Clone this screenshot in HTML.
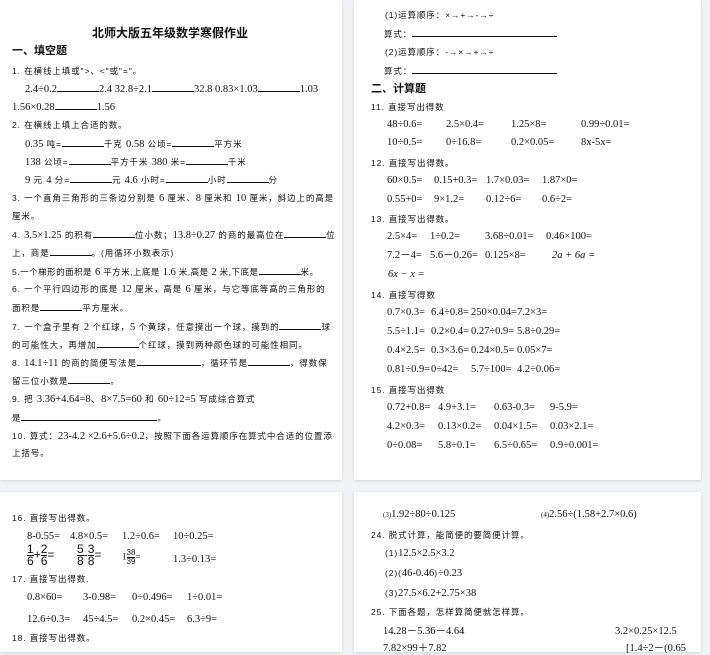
<!DOCTYPE html>
<html><head><meta charset="utf-8"><style>
body{margin:0;width:710px;height:646px;background:#f2f3f6;position:relative;overflow:hidden;font-family:"Liberation Serif","Noto Sans CJK SC",serif;color:#111}
.pg{position:absolute;background:#fff;box-shadow:0 1px 3px rgba(0,0,0,.12)}
.l{position:absolute;white-space:nowrap;font-size:10px;line-height:12px}
.c{font-family:"Liberation Sans","Noto Sans CJK SC",sans-serif;font-size:8.5px;letter-spacing:.9px}
.n{font-size:10.5px;font-family:"Liberation Serif",serif;letter-spacing:0}
.b{display:inline-block;border-bottom:1px solid #111;height:9px;vertical-align:baseline}
.h{font-family:"Liberation Sans","Noto Sans CJK SC",sans-serif;font-weight:bold;font-size:11px}
.s{position:absolute}
.f{display:inline-block;vertical-align:middle;text-align:center;font-family:"Liberation Sans",sans-serif;font-size:12px;line-height:11px}
.f span{display:block;border-top:1px solid #111}
</style></head><body>
<div class="pg" style="left:0;top:0;width:342px;height:480px"></div>
<div class="pg" style="left:354px;top:0;width:347px;height:480px"></div>
<div class="pg" style="left:0;top:492px;width:342px;height:160px"></div>
<div class="pg" style="left:354px;top:492px;width:347px;height:160px"></div>

<div class="l h" style="left:92px;top:27px;font-size:12px">北师大版五年级数学寒假作业</div>
<div class="l h" style="left:12px;top:45px">一、填空题</div>
<div class="l c" style="left:12px;top:65px">1. 在横线上填或"&gt;、&lt;"或"="。</div>
<div class="l n" style="left:25px;top:82px">2.4÷0.2<span class="b" style="width:42px"></span>2.4 32.8÷2.1<span class="b" style="width:42px"></span>32.8 0.83×1.03<span class="b" style="width:42px"></span>1.03</div>
<div class="l n" style="left:12px;top:100px">1.56×0.28<span class="b" style="width:42px"></span>1.56</div>
<div class="l c" style="left:12px;top:119px">2. 在横线上填上合适的数。</div>
<div class="l c" style="left:25px;top:137px"><span class="n">0.35</span> 吨=<span class="b" style="width:42px"></span>千克 <span class="n">0.58</span> 公顷=<span class="b" style="width:42px"></span>平方米</div>
<div class="l c" style="left:25px;top:155px"><span class="n">138</span> 公顷=<span class="b" style="width:42px"></span>平方千米 <span class="n">380</span> 米=<span class="b" style="width:42px"></span>千米</div>
<div class="l c" style="left:25px;top:173px"><span class="n">9</span> 元 <span class="n">4</span> 分=<span class="b" style="width:42px"></span>元 <span class="n">4.6</span> 小时=<span class="b" style="width:42px"></span>小时<span class="b" style="width:42px"></span>分</div>
<div class="l c" style="left:12px;top:192px">3. 一个直角三角形的三条边分别是 <span class="n">6</span> 厘米、<span class="n">8</span> 厘米和 <span class="n">10</span> 厘米，斜边上的高是</div>
<div class="l c" style="left:12px;top:210px">厘米。</div>
<div class="l c" style="left:12px;top:228px">4. <span class="n">3.5×1.25</span> 的积有<span class="b" style="width:42px"></span>位小数；<span class="n">13.8÷0.27</span> 的商的最高位在<span class="b" style="width:42px"></span>位</div>
<div class="l c" style="left:12px;top:246px">上，商是<span class="b" style="width:42px"></span>。(用循环小数表示)</div>
<div class="l c" style="left:12px;top:265px;letter-spacing:.5px">5.一个梯形的面积是 <span class="n">6</span> 平方米,上底是 <span class="n">1.6</span> 米,高是 <span class="n">2</span> 米,下底是<span class="b" style="width:42px"></span>米。</div>
<div class="l c" style="left:12px;top:283px">6. 一个平行四边形的底是 <span class="n">12</span> 厘米，高是 <span class="n">6</span> 厘米，与它等底等高的三角形的</div>
<div class="l c" style="left:12px;top:301px">面积是<span class="b" style="width:42px"></span>平方厘米。</div>
<div class="l c" style="left:12px;top:320px">7. 一个盒子里有 <span class="n">2</span> 个红球，<span class="n">5</span> 个黄球，任意摸出一个球，摸到的<span class="b" style="width:42px"></span>球</div>
<div class="l c" style="left:12px;top:338px">的可能性大，再增加<span class="b" style="width:42px"></span>个红球，摸到两种颜色球的可能性相同。</div>
<div class="l c" style="left:12px;top:356px">8. <span class="n">14.1÷11</span> 的商的简便写法是<span class="b" style="width:64px"></span>，循环节是<span class="b" style="width:42px"></span>，得数保</div>
<div class="l c" style="left:12px;top:374px">留三位小数是<span class="b" style="width:42px"></span>。</div>
<div class="l c" style="left:12px;top:393px">9. 把 <span class="n">3.36+4.64=8、8×7.5=60</span> 和 <span class="n">60÷12=5</span> 写成综合算式</div>
<div class="l c" style="left:12px;top:411px">是<span class="b" style="width:136px"></span>。</div>
<div class="l c" style="left:12px;top:430px">10. 算式：<span class="n">23-4.2 ×2.6+5.6÷0.2</span>，按照下面各运算顺序在算式中合适的位置添</div>
<div class="l c" style="left:12px;top:447px">上括号。</div>

<div class="l c" style="left:385px;top:9px">(1)运算顺序：×→+→-→÷</div>
<div class="l c" style="left:384px;top:27px">算式：<span class="b" style="width:145px"></span></div>
<div class="l c" style="left:385px;top:46px">(2)运算顺序：-→×→+→÷</div>
<div class="l c" style="left:384px;top:64px">算式：<span class="b" style="width:145px"></span></div>
<div class="l h" style="left:371px;top:83px">二、计算题</div>
<div class="l c" style="left:371px;top:101px">11. 直接写出得数</div>
<div class="l n" style="top:119px;left:0;width:710px"><span class="s" style="left:387px">48÷0.6=</span><span class="s" style="left:446px">2.5×0.4=</span><span class="s" style="left:511px">1.25×8=</span><span class="s" style="left:581px">0.99÷0.01=</span></div>
<div class="l n" style="top:137px;left:0;width:710px"><span class="s" style="left:387px">10÷0.5=</span><span class="s" style="left:446px">0÷16.8=</span><span class="s" style="left:511px">0.2×0.05=</span><span class="s" style="left:581px">8x-5x=</span></div>
<div class="l c" style="left:371px;top:157px">12. 直接写出得数。</div>
<div class="l n" style="top:175px;left:0;width:710px"><span class="s" style="left:387px">60×0.5=</span><span class="s" style="left:434px">0.15+0.3=</span><span class="s" style="left:486px">1.7×0.03=</span><span class="s" style="left:542px">1.87×0=</span></div>
<div class="l n" style="top:194px;left:0;width:710px"><span class="s" style="left:387px">0.55+0=</span><span class="s" style="left:434px">9×1.2=</span><span class="s" style="left:486px">0.12÷6=</span><span class="s" style="left:542px">0.6÷2=</span></div>
<div class="l c" style="left:371px;top:213px">13. 直接写出得数。</div>
<div class="l n" style="top:231px;left:0;width:710px"><span class="s" style="left:387px">2.5×4=</span><span class="s" style="left:430px">1÷0.2=</span><span class="s" style="left:485px">3.68÷0.01=</span><span class="s" style="left:546px">0.46×100=</span></div>
<div class="l n" style="top:250px;left:0;width:710px"><span class="s" style="left:387px">7.2－4=</span><span class="s" style="left:430px">5.6－0.26=</span><span class="s" style="left:485px">0.125×8=</span><span class="s" style="left:552px;font-style:italic">2a + 6a =</span></div>
<div class="l n" style="left:388px;top:269px;font-style:italic">6x − x =</div>
<div class="l c" style="left:371px;top:289px">14. 直接写得数</div>
<div class="l n" style="top:307px;left:0;width:710px"><span class="s" style="left:387px">0.7×0.3=</span><span class="s" style="left:431px">6.4÷0.8=</span><span class="s" style="left:471px">250×0.04=</span><span class="s" style="left:517px">7.2×3=</span></div>
<div class="l n" style="top:326px;left:0;width:710px"><span class="s" style="left:387px">5.5÷1.1=</span><span class="s" style="left:431px">0.2×0.4=</span><span class="s" style="left:471px">0.27÷0.9=</span><span class="s" style="left:517px">5.8÷0.29=</span></div>
<div class="l n" style="top:345px;left:0;width:710px"><span class="s" style="left:387px">0.4×2.5=</span><span class="s" style="left:431px">0.3×3.6=</span><span class="s" style="left:471px">0.24×0.5=</span><span class="s" style="left:517px">0.05×7=</span></div>
<div class="l n" style="top:364px;left:0;width:710px"><span class="s" style="left:387px">0.81÷0.9=</span><span class="s" style="left:431px">0÷42=</span><span class="s" style="left:471px">5.7÷100=</span><span class="s" style="left:517px">4.2÷0.06=</span></div>
<div class="l c" style="left:371px;top:384px">15. 直接写出得数</div>
<div class="l n" style="top:402px;left:0;width:710px"><span class="s" style="left:387px">0.72+0.8=</span><span class="s" style="left:438px">4.9+3.1=</span><span class="s" style="left:494px">0.63-0.3=</span><span class="s" style="left:550px">9-5.9=</span></div>
<div class="l n" style="top:421px;left:0;width:710px"><span class="s" style="left:387px">4.2×0.3=</span><span class="s" style="left:438px">0.13×0.2=</span><span class="s" style="left:494px">0.04×1.5=</span><span class="s" style="left:550px">0.03×2.1=</span></div>
<div class="l n" style="top:440px;left:0;width:710px"><span class="s" style="left:387px">0÷0.08=</span><span class="s" style="left:438px">5.8÷0.1=</span><span class="s" style="left:494px">6.5÷0.65=</span><span class="s" style="left:550px">0.9÷0.001=</span></div>

<div class="l c" style="left:12px;top:512px">16. 直接写出得数。</div>
<div class="l n" style="top:531px;left:0;width:342px"><span class="s" style="left:27px">8-0.55=</span><span class="s" style="left:70px">4.8×0.5=</span><span class="s" style="left:122px">1.2÷0.6=</span><span class="s" style="left:173px">10÷0.25=</span></div>
<div class="s" style="left:27px;top:544px;font-size:12px;font-family:'Liberation Sans',sans-serif;white-space:nowrap"><span class="f">1<span>6</span></span>+<span class="f">2<span>6</span></span>=</div>
<div class="s" style="left:77px;top:544px;font-size:12px;font-family:'Liberation Sans',sans-serif;white-space:nowrap"><span class="f">5<span>8</span></span>-<span class="f">3<span>8</span></span>=</div>
<div class="s" style="left:122px;top:549px;font-size:9px;white-space:nowrap">1<span class="f" style="font-size:8px;line-height:8px">38<span>39</span></span>=</div>
<div class="l n" style="left:173px;top:554px">1.3÷0.13=</div>
<div class="l c" style="left:12px;top:573px">17. 直接写出得数.</div>
<div class="l n" style="top:592px;left:0;width:342px"><span class="s" style="left:27px">0.8×60=</span><span class="s" style="left:83px">3-0.98=</span><span class="s" style="left:132px">0÷0.496=</span><span class="s" style="left:187px">1÷0.01=</span></div>
<div class="l n" style="top:614px;left:0;width:342px"><span class="s" style="left:27px">12.6÷0.3=</span><span class="s" style="left:83px">45÷4.5=</span><span class="s" style="left:132px">0.2×0.45=</span><span class="s" style="left:187px">6.3÷9=</span></div>
<div class="l c" style="left:12px;top:632px">18. 直接写出得数。</div>

<div class="l n" style="left:383px;top:509px"><span style="font-size:7px">(3)</span>1.92÷80÷0.125</div>
<div class="l n" style="left:541px;top:509px"><span style="font-size:7px">(4)</span>2.56÷(1.58+2.7×0.6)</div>
<div class="l c" style="left:371px;top:529px">24. 脱式计算，能简便的要简便计算。</div>
<div class="l n" style="left:385px;top:547px"><span class="c">(1)</span>12.5×2.5×3.2</div>
<div class="l n" style="left:385px;top:567px"><span class="c">(2)(</span>46-0.46<span class="c">)</span>÷0.23</div>
<div class="l n" style="left:385px;top:587px"><span class="c">(3)</span>27.5×6.2+2.75×38</div>
<div class="l c" style="left:371px;top:606px">25. 下面各题，怎样算简便就怎样算。</div>
<div class="l n" style="left:383px;top:626px">14.28－5.36－4.64</div>
<div class="l n" style="left:615px;top:626px">3.2×0.25×12.5</div>
<div class="l n" style="left:383px;top:643px">7.82×99＋7.82</div>
<div class="l n" style="left:626px;top:643px">[1.4÷2－(0.65</div>
</body></html>
